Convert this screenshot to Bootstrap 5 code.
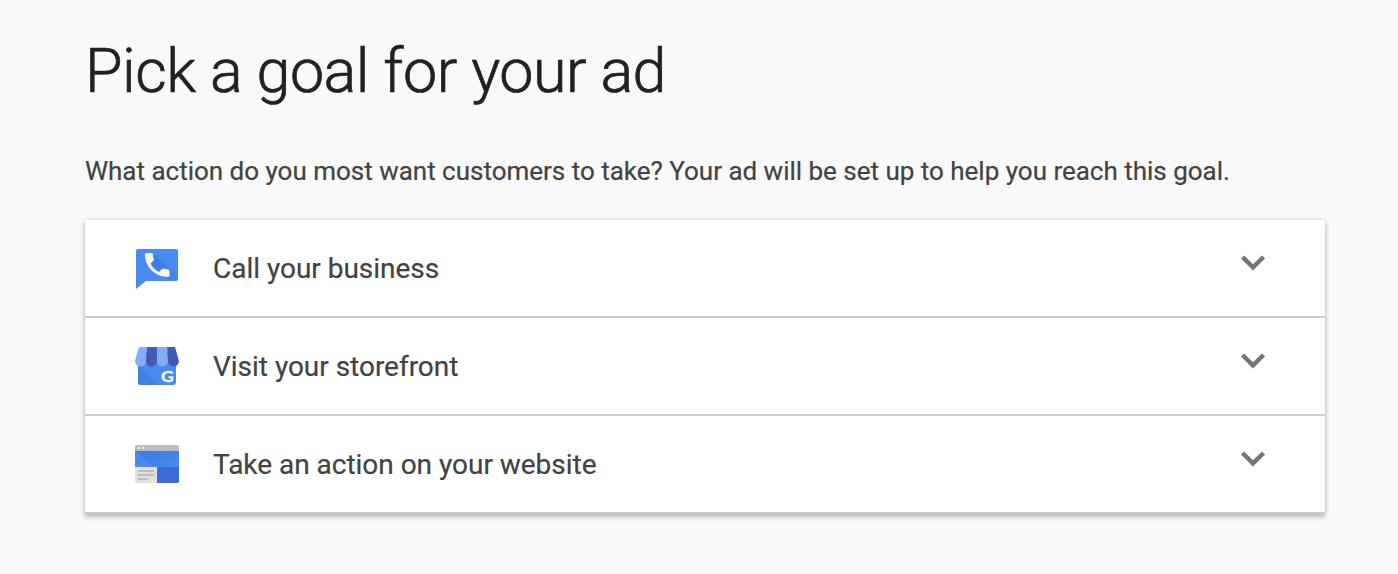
<!DOCTYPE html>
<html lang="en">

<head>
    <meta charset="UTF-8">
    <meta name="viewport" content="width=device-width, initial-scale=1">
    <title>Pick a goal for your ad</title>
    <link href="https://cdn.jsdelivr.net/npm/bootstrap@5.3.0/dist/css/bootstrap.min.css" rel="stylesheet">
    <style>
        body {
            background-color: #f9f9f9;
            color: #424242;
            font-family: Roboto, sans-serif;
        }

        .goal-page {
            width: 1240px;
            margin-left: 85px;
            padding-top: 35px;
            padding-bottom: 40px;
        }

        .goal-title {
            color: #212121;
            font-size: 61px;
            font-weight: 300;
            letter-spacing: -.5px;
            line-height: 72px;
            margin-bottom: 44px;
            -webkit-text-stroke: .7px #212121;
        }

        .goal-intro {
            font-size: 26px;
            letter-spacing: -.01px;
            line-height: 40px;
            margin-bottom: 29px;
            white-space: nowrap;
            -webkit-text-stroke: .2px #424242;
        }

        .goal-list {
            box-shadow: 0 3px 5px rgba(0, 0, 0, .24), 0 0 4px rgba(0, 0, 0, .14);
        }

        .goal-item {
            height: 98px;
            padding: 0 60px 0 50px;
            border: 0;
            border-bottom: 2px solid #cdcdcd;
            background-color: #fff;
            color: #424242;
            font-size: 28px;
        }

        .goal-label {
            letter-spacing: -.02px;
            padding-top: 2px;
            -webkit-text-stroke: .2px #424242;
        }

        .goal-icon {
            width: 44px;
            height: 44px;
            margin-right: 34px;
            margin-bottom: 4px;
            overflow: visible;
        }

        .goal-arrow {
            width: 24px;
            height: 16px;
            margin-bottom: 10px;
            overflow: visible;
        }
    </style>
</head>

<body class="min-vh-100">
    <main class="goal-page">
        <h1 class="goal-title">Pick a goal for your ad</h1>
        <p class="goal-intro">What action do you most want customers to take? Your ad will be set up to help you reach this goal.</p>

        <div class="goal-list">
            <button type="button" class="goal-item d-flex align-items-center w-100 text-start">
                <svg class="goal-icon" viewBox="0 0 44 44" aria-hidden="true">
                    <defs>
                        <linearGradient id="callShade" x1="0" y1="0" x2="1" y2="1">
                            <stop offset="0" stop-color="#2f64c4" />
                            <stop offset="1" stop-color="#4285f4" />
                        </linearGradient>
                    </defs>
                    <path d="M3 5h38a2 2 0 0 1 2 2v28a2 2 0 0 1-2 2H11L1 45V7a2 2 0 0 1 2-2z" fill="#4a89ee" />
                    <path d="M18 9.500l25 24V35a2 2 0 0 1-2 2h-5L14 20z" fill="url(#callShade)" opacity=".5" />
                    <path d="M11.500 9h5c.8 0 1.400.6 1.500 1.400.1 1.600.4 3.100.9 4.500.2.6 0 1.100-.4 1.500l-3 3c2.100 3.900 4.600 6.400 8.500 8.500l3-3c.4-.4 1-.6 1.600-.4 1.400.5 2.900.8 4.500.9.8.1 1.400.7 1.400 1.500v4.600c0 .8-.6 1.400-1.400 1.400C20 32.900 10 23 10 10.500 10 9.600 10.600 9 11.500 9z" fill="#f4f4f4" />
                </svg>
                <span class="goal-label">Call your business</span>
                <svg class="goal-arrow ms-auto" viewBox="0 0 24 16" aria-hidden="true">
                    <path d="M1.500 2L12 12.300 22.500 2" fill="none" stroke="#757575" stroke-width="4.400" />
                </svg>
            </button>

            <button type="button" class="goal-item d-flex align-items-center w-100 text-start">
                <svg class="goal-icon" viewBox="0 0 44 44" aria-hidden="true">
                    <path d="M3 10h38v30a3 3 0 0 1-3 3H6a3 3 0 0 1-3-3z" fill="#4a89ee" />
                    <path d="M3 23l20 20H6a3 3 0 0 1-3-3z" fill="#427de0" />
                    <path d="M4 5h8l-1 14a5.500 5.500 0 0 1-11 0z" fill="#83adf5" />
                    <path d="M12 5h10v14a5.500 5.500 0 0 1-11 0z" fill="#4359b1" />
                    <path d="M22 5h10l1 14a5.500 5.500 0 0 1-11 0z" fill="#83adf5" />
                    <path d="M32 5h8l4 14a5.500 5.500 0 0 1-11 0z" fill="#4359b1" />
                    <text x="26" y="40.300" font-family="Lato, sans-serif" font-size="15.500" font-weight="700" fill="#f6f8fd" stroke="#f6f8fd" stroke-width=".3" textLength="12.800" lengthAdjust="spacingAndGlyphs">G</text>
                </svg>
                <span class="goal-label">Visit your storefront</span>
                <svg class="goal-arrow ms-auto" viewBox="0 0 24 16" aria-hidden="true">
                    <path d="M1.500 2L12 12.300 22.500 2" fill="none" stroke="#757575" stroke-width="4.400" />
                </svg>
            </button>

            <button type="button" class="goal-item d-flex align-items-center w-100 text-start">
                <svg class="goal-icon" viewBox="0 0 44 44" aria-hidden="true">
                    <defs>
                        <linearGradient id="siteShade" x1="0" y1="0" x2="1" y2="1">
                            <stop offset="0" stop-color="#3d79df" />
                            <stop offset="1" stop-color="#4a89ee" />
                        </linearGradient>
                    </defs>
                    <path d="M0 11h44v16H0z" fill="#4a89ee" />
                    <path d="M1 11h43v16H17z" fill="url(#siteShade)" />
                    <path d="M2 5h40a2 2 0 0 1 2 2v4H0V7a2 2 0 0 1 2-2z" fill="#bdbdbd" />
                    <path d="M3 7h2v2H3zM7 7h2v2H7z" fill="#eee" />
                    <path d="M0 27h22v16H2a2 2 0 0 1-2-2z" fill="#e0e0e0" />
                    <path d="M22 27h22v14a2 2 0 0 1-2 2H22z" fill="#3b6bd6" />
                    <path d="M3 30h16v2H3zM3 34h16v2H3zM3 38h10v2H3z" fill="#bdbdbd" />
                </svg>
                <span class="goal-label">Take an action on your website</span>
                <svg class="goal-arrow ms-auto" viewBox="0 0 24 16" aria-hidden="true">
                    <path d="M1.500 2L12 12.300 22.500 2" fill="none" stroke="#757575" stroke-width="4.400" />
                </svg>
            </button>
        </div>
    </main>

    <script src="https://cdn.jsdelivr.net/npm/bootstrap@5.3.0/dist/js/bootstrap.bundle.min.js"></script>
</body>

</html>
